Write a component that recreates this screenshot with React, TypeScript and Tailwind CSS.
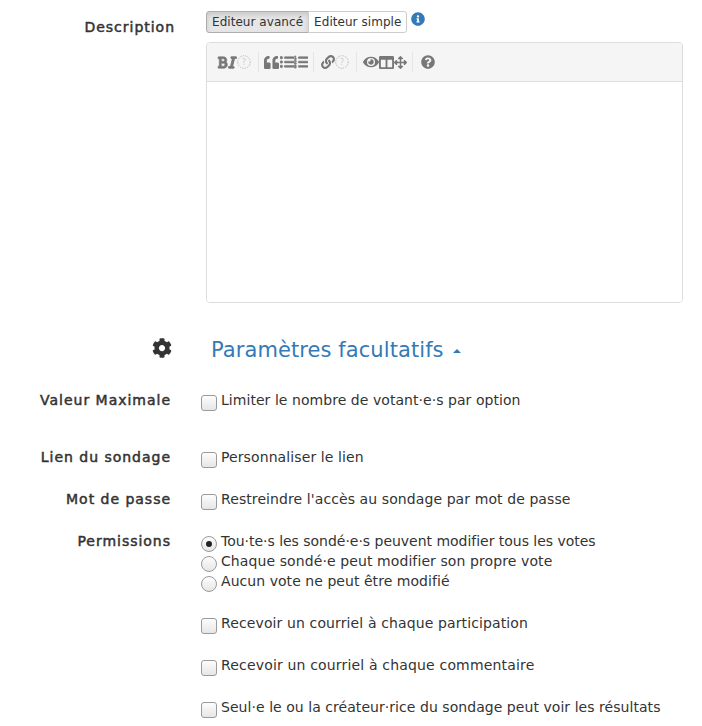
import type { ReactNode } from "react";
import { FaBold, FaItalic, FaQuoteLeft, FaListUl, FaListOl, FaLink, FaEye, FaColumns, FaArrowsAlt, FaQuestionCircle, FaCog, FaInfoCircle } from "react-icons/fa";

const labelClass = "text-right text-[14px] leading-[20px] tracking-[0.98px] text-[#333] [-webkit-text-stroke:0.5px_#333]";

function Missing() {
  return (
    <svg width="14" height="14" viewBox="0 0 14 14" className="shrink-0">
      <circle cx="7" cy="7" r="6.3" fill="none" stroke="#bdbdbd" strokeWidth="1" strokeDasharray="1.5 1" />
      <text x="7" y="10" textAnchor="middle" fontSize="9" fill="#d0d0d0" fontFamily="DejaVu Sans">?</text>
    </svg>
  );
}

function Slot({ w, children }: { w: string; children: ReactNode }) {
  return <span className={"flex items-center justify-center shrink-0 " + w}>{children}</span>;
}

function Sep({ className }: { className: string }) {
  return <div className={"w-px h-[20px] bg-[#e5e5e5] " + className} />;
}

function Box() {
  return (
    <span className="block w-[16px] h-[16px] shrink-0 rounded-[3px] border border-[#9a9a9a] bg-gradient-to-b from-[#fdfdfd] to-[#e6e6e6]" />
  );
}

function Radio({ on }: { on?: boolean }) {
  return (
    <span className="flex items-center justify-center w-[16px] h-[16px] shrink-0 rounded-full border border-[#9a9a9a] bg-gradient-to-b from-[#fdfdfd] to-[#e6e6e6]">
      {on && <span className="block w-[6px] h-[6px] rounded-full bg-[#222]" />}
    </span>
  );
}

function Row({ label, text, className, track }: { label?: string; text: string; className: string; track: string }) {
  return (
    <div className={"flex " + className}>
      <div className={"w-[171px] " + labelClass}>{label}</div>
      <div className="ml-[30px] flex items-start">
        <span className="mt-[5px]"><Box /></span>
        <span className={"ml-[4px] leading-[20px] " + track}>{text}</span>
      </div>
    </div>
  );
}

function RadioRow({ on, text, track }: { on?: boolean; text: string; track: string }) {
  return (
    <div className="flex items-start h-[20px]">
      <span className="mt-[5px]"><Radio on={on} /></span>
      <span className={"ml-[4px] leading-[20px] " + track}>{text}</span>
    </div>
  );
}

export default function App() {
  return (
    <div className="w-[702px] h-[726px] overflow-hidden bg-white text-[14px] tracking-[0.05px] text-[#333] font-['DejaVu_Sans',sans-serif]">
      <div className="flex pt-[11px]">
        <div className={"w-[175px] pt-[6px] " + labelClass}>Description</div>
        <div className="ml-[31px] w-[477px]">
          <div className="flex items-start">
            <div className="flex h-[22px] text-[12px] leading-[20px]">
              <div className="px-[5px] border border-[#adadad] rounded-l-[3px] bg-[#e6e6e6] shadow-[inset_0_3px_5px_rgba(0,0,0,0.125)]">Editeur avancé</div>
              <div className="px-[5px] -ml-px border border-[#cccccc] rounded-r-[3px] bg-white">Editeur simple</div>
            </div>
            <FaInfoCircle className="ml-[4px] mt-[1px] text-[#337ab7]" size={14} />
          </div>
          <div className="mt-[9px] h-[261px] border border-[#dddddd] rounded-[4px] flex flex-col overflow-hidden">
            <div className="h-[39px] shrink-0 bg-[#f5f5f5] border-b border-[#dddddd] flex items-center pl-[10px] text-[#777777]">
              <Slot w="w-[11px]"><FaBold size={13} stroke="currentColor" strokeWidth={25} /></Slot>
              <Slot w="w-[9px]"><FaItalic size={13} stroke="currentColor" strokeWidth={35} /></Slot>
              <Missing />
              <Sep className="ml-[7px] mr-[5px]" />
              <Slot w="w-[15px]"><FaQuoteLeft size={15} /></Slot>
              <Slot w="w-[15px]"><FaListUl size={14} stroke="currentColor" strokeWidth={20} /></Slot>
              <Slot w="w-[14px]"><FaListOl size={14} stroke="currentColor" strokeWidth={20} /></Slot>
              <Sep className="ml-[5px] mr-[6px]" />
              <Slot w="w-[15px]"><FaLink size={14} /></Slot>
              <Missing />
              <Sep className="ml-[7px] mr-[5px]" />
              <Slot w="w-[17px]"><FaEye size={16} /></Slot>
              <Slot w="w-[15px]"><FaColumns size={15} /></Slot>
              <Slot w="w-[13px]"><FaArrowsAlt size={13} /></Slot>
              <Sep className="ml-[5px] mr-[8px]" />
              <FaQuestionCircle size={14} />
            </div>
            <div className="flex-1 bg-white" />
          </div>
        </div>
      </div>

      <div className="flex items-start mt-[34px]">
        <div className="w-[172px] flex justify-end pt-[1px]"><FaCog size={20} className="text-[#333]" /></div>
        <div className="ml-[39px] flex items-center h-[26px] text-[21px] leading-[26px] tracking-[0.08px] text-[#337ab7]">
          Paramètres facultatifs
          <span className="ml-[9px] mt-[2px] block w-0 h-0 border-x-[4px] border-x-transparent border-b-[4px] border-b-[#337ab7]" />
        </div>
      </div>

      <Row label="Valeur Maximale" track="tracking-[0.05px]" text="Limiter le nombre de votant·e·s par option" className="mt-[27px]" />
      <Row label="Lien du sondage" track="tracking-[0.1px]" text="Personnaliser le lien" className="mt-[36px]" />
      <Row label="Mot de passe" track="tracking-[0.09px]" text="Restreindre l'accès au sondage par mot de passe" className="mt-[21px]" />

      <div className="flex mt-[21px]">
        <div className={"w-[171px] " + labelClass}>Permissions</div>
        <div className="ml-[30px] flex flex-col">
          <RadioRow on track="tracking-[-0.025px]" text="Tou·te·s les sondé·e·s peuvent modifier tous les votes" />
          <RadioRow track="tracking-[0.095px]" text="Chaque sondé·e peut modifier son propre vote" />
          <RadioRow track="tracking-[0.05px]" text="Aucun vote ne peut être modifié" />
        </div>
      </div>

      <Row track="tracking-[0.12px]" text="Recevoir un courriel à chaque participation" className="mt-[22px]" />
      <Row track="tracking-[0.17px]" text="Recevoir un courriel à chaque commentaire" className="mt-[21px]" />
      <Row track="tracking-[0.05px]" text="Seul·e le ou la créateur·rice du sondage peut voir les résultats" className="mt-[21px]" />
    </div>
  );
}
